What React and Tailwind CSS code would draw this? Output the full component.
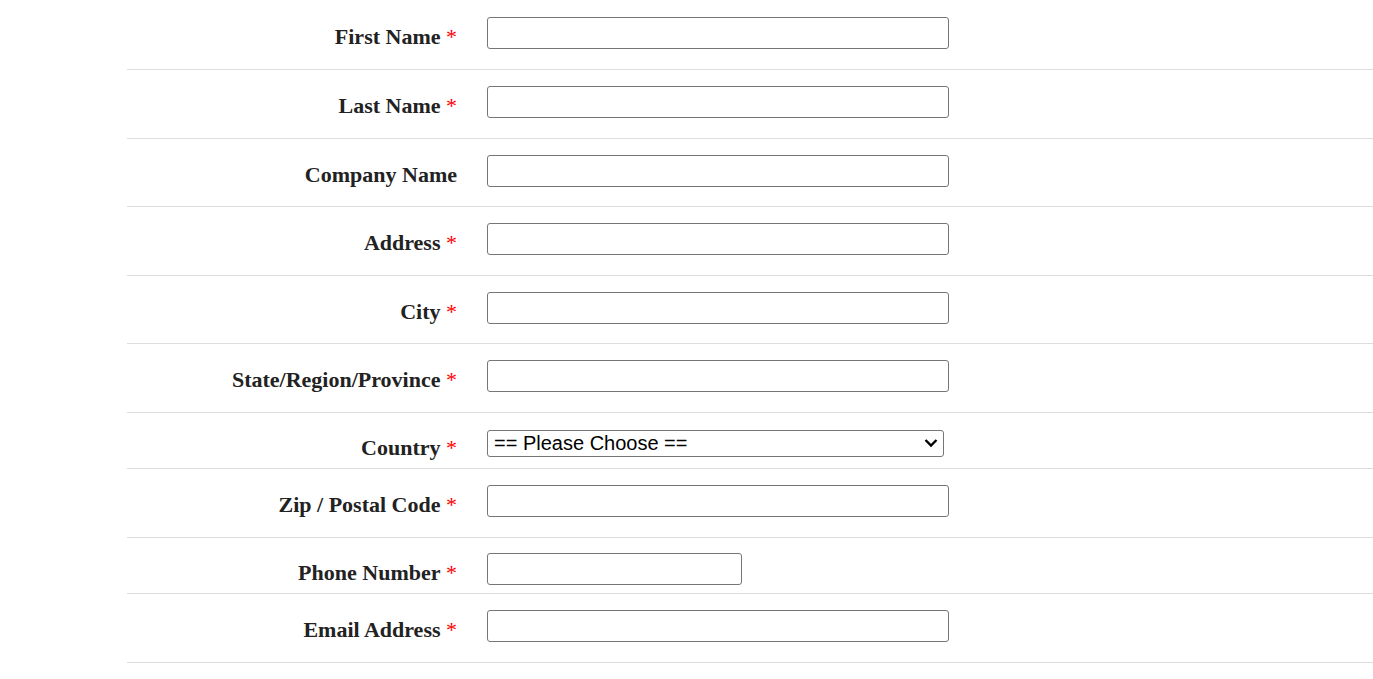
import React from "react";

const FIELDS = [
  { label: "First Name", required: true, type: "text", h: "h-[69px]" },
  { label: "Last Name", required: true, type: "text", h: "h-[69px]" },
  { label: "Company Name", required: false, type: "text", h: "h-[68px]" },
  { label: "Address", required: true, type: "text", h: "h-[69px]" },
  { label: "City", required: true, type: "text", h: "h-[68px]" },
  { label: "State/Region/Province", required: true, type: "text", h: "h-[69px]" },
  { label: "Country", required: true, type: "select", h: "h-[56px]" },
  { label: "Zip / Postal Code", required: true, type: "text", h: "h-[69px]" },
  { label: "Phone Number", required: true, type: "phone", h: "h-[56px]" },
  { label: "Email Address", required: true, type: "text", h: "h-[69px]" },
];

const Chevron = () => (
  <svg
    className="pointer-events-none absolute right-[6px] top-[8px]"
    width="14"
    height="10"
    viewBox="0 0 14 10"
    fill="none"
  >
    <path d="M1.5 2 L7 7.5 L12.5 2" stroke="#000" strokeWidth="2.4" />
  </svg>
);

const Row = ({ field }) => {
  const pad =
    field.type === "select" ? "pt-[17px]" : field.type === "phone" ? "pt-[15px]" : "pt-[16px]";
  return (
    <div className={`flex items-start border-b border-[#dddddd] ${field.h} ${pad}`}>
      <label
        className={`w-[330px] shrink-0 text-right text-[22px] leading-[33px] font-bold text-[#222222] ${
          field.type === "select" ? "mt-[1px]" : "mt-[3px]"
        }`}
        style={{ fontFamily: '"Liberation Serif", serif' }}
      >
        {field.label}
        {field.required && <span className="font-normal text-[#ff0000]"> *</span>}
      </label>
      <div className="ml-[30px]">
        {field.type === "select" ? (
          <div className="relative w-[457px]">
            <select
              className="appearance-none block w-[457px] h-[27px] border border-[#767676] rounded-[3px] text-[20px] leading-[25px] text-black bg-white pl-[6px]"
              style={{ fontFamily: '"Liberation Sans", Arial, sans-serif' }}
            >
              <option>== Please Choose ==</option>
            </select>
            <Chevron />
          </div>
        ) : (
          <input
            type="text"
            className={`${field.type === "phone" ? "w-[255px]" : "w-[462px]"} block h-[32px] border border-[#767676] rounded-[3px] bg-white`}
          />
        )}
      </div>
    </div>
  );
};

export default function App() {
  return (
    <div className="bg-white min-h-[679px] pl-[127px] pt-[1px]">
      {FIELDS.map((f) => (
        <Row key={f.label} field={f} />
      ))}
    </div>
  );
}
